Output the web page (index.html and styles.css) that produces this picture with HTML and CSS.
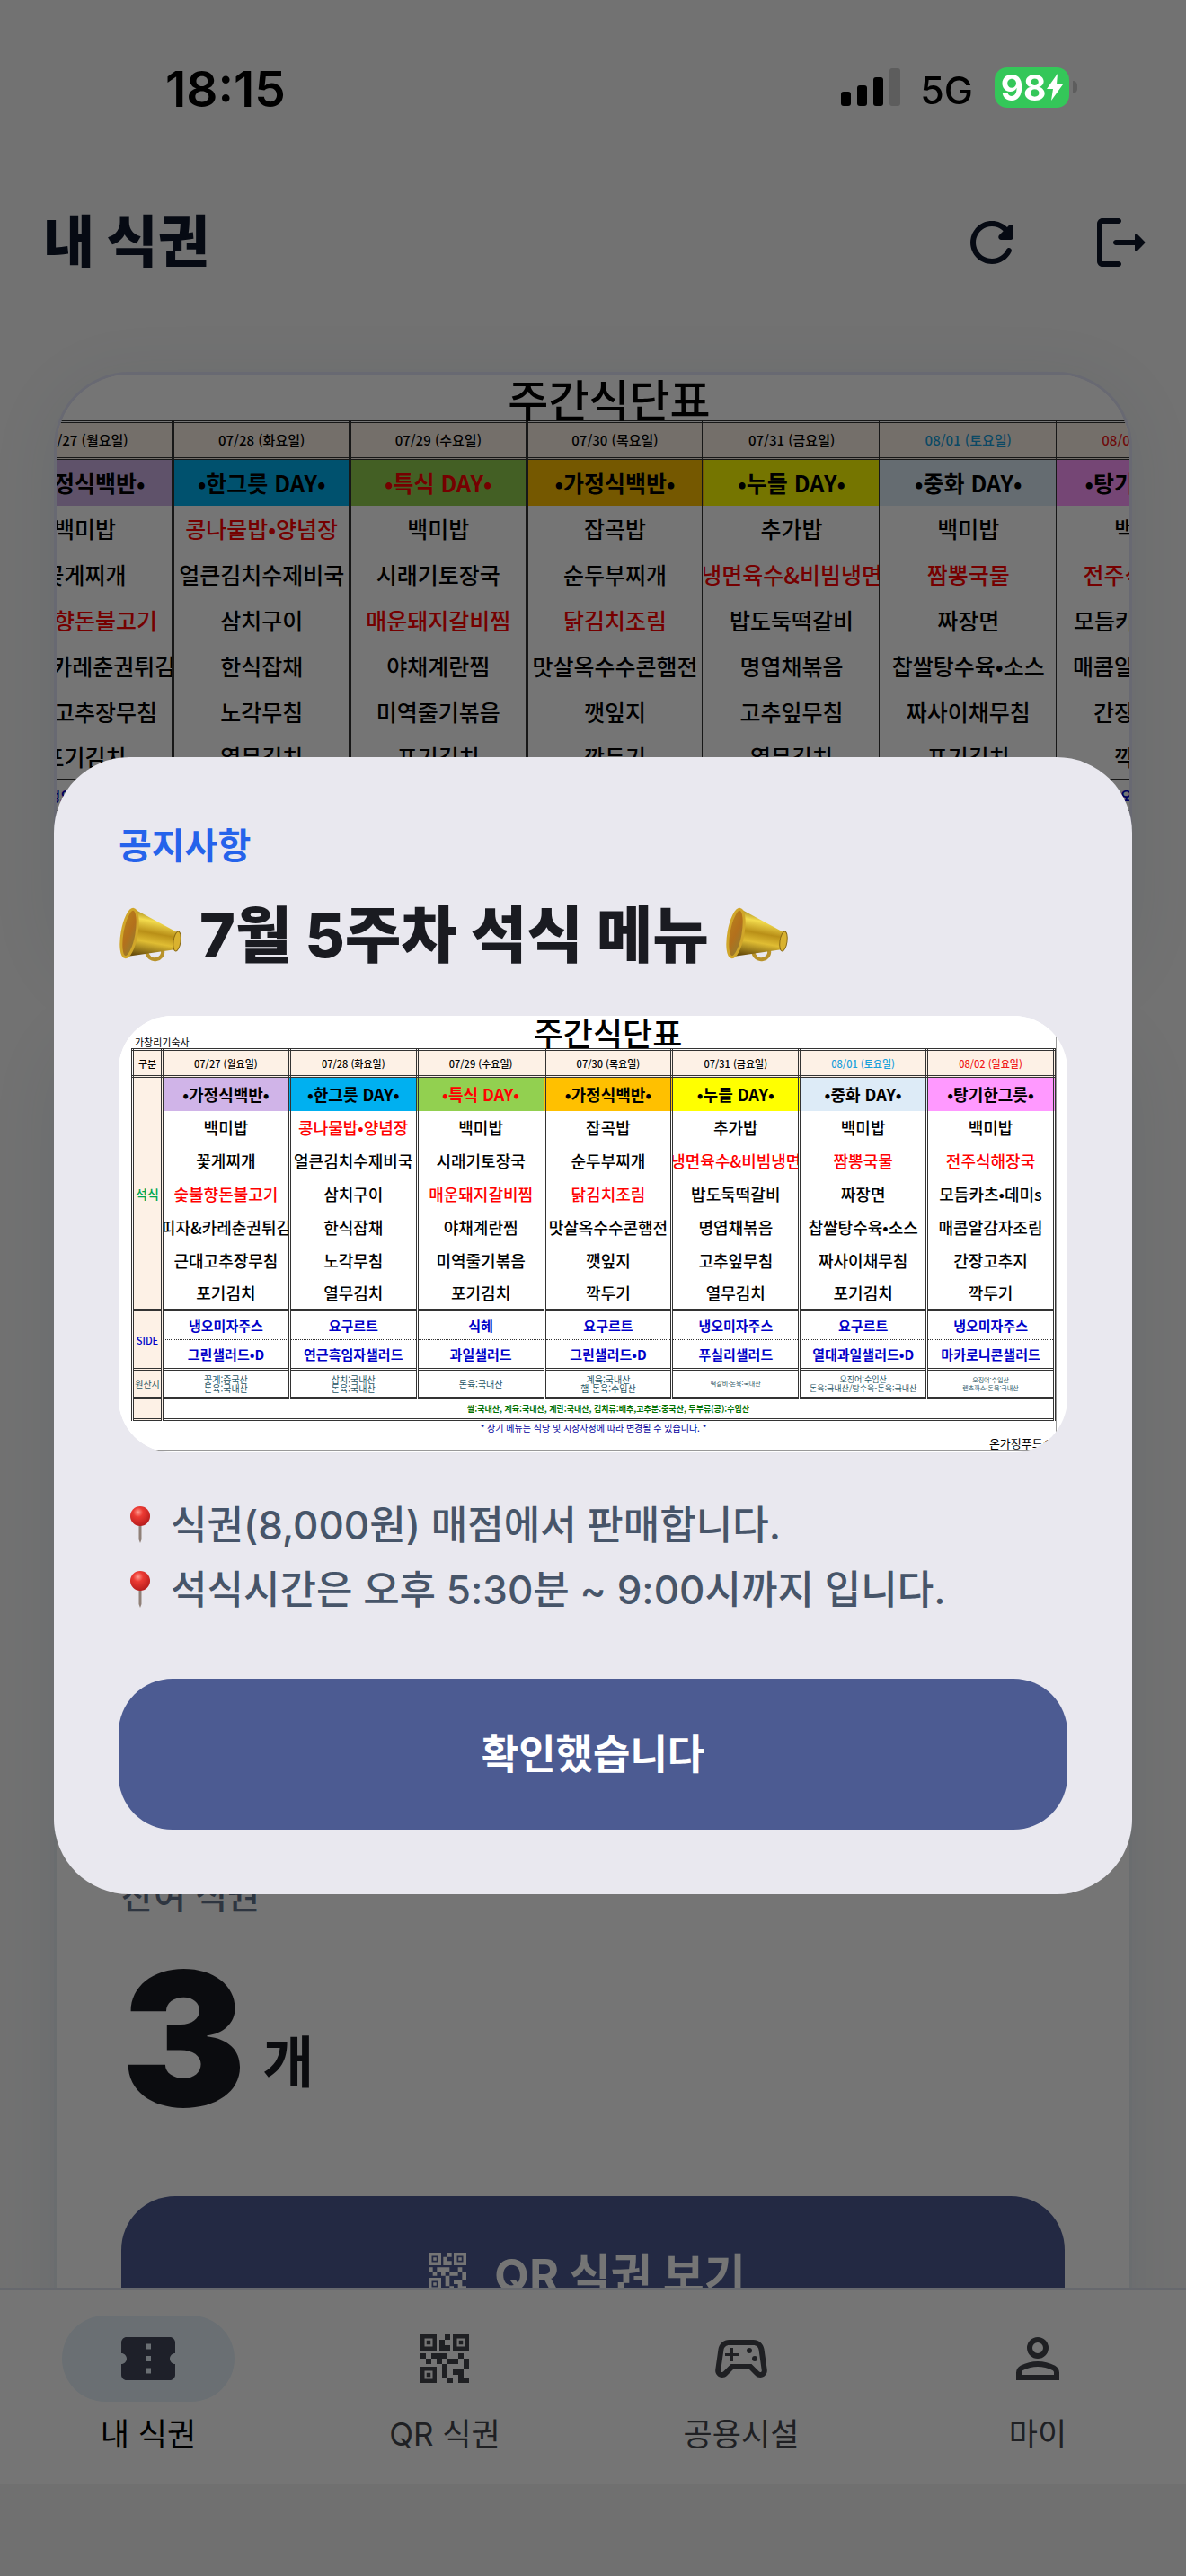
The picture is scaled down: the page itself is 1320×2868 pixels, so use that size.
FILE: index.html
```html
<!DOCTYPE html>
<html lang="ko">
<head>
<meta charset="utf-8">
<meta name="viewport" content="width=device-width, initial-scale=1">
<title>내 식권</title>
<link rel="stylesheet" href="styles.css">
</head>
<body>
<svg class="defs" aria-hidden="true">
  <defs>
    <linearGradient id="brass" x1="0.6" y1="0" x2="0.4" y2="1">
      <stop offset="0" stop-color="#8a6a10"/>
      <stop offset="0.25" stop-color="#f3dc4e"/>
      <stop offset="0.5" stop-color="#b98f17"/>
      <stop offset="0.7" stop-color="#e0bd33"/>
      <stop offset="1" stop-color="#6b4f0c"/>
    </linearGradient>
    <linearGradient id="bell" x1="0" y1="0" x2="1" y2="1">
      <stop offset="0" stop-color="#b9821c"/>
      <stop offset="0.5" stop-color="#b3701c"/>
      <stop offset="1" stop-color="#8c8034"/>
    </linearGradient>
    <radialGradient id="pinhead" cx="0.4" cy="0.3" r="0.7">
      <stop offset="0" stop-color="#ff9a8f"/>
      <stop offset="0.35" stop-color="#ec3a33"/>
      <stop offset="1" stop-color="#b81d1d"/>
    </radialGradient>
    <symbol id="megaphone" viewBox="0 0 70 62">
      <path d="M30 49c1 7 6 10 11 9s8-5 7-10" fill="none" stroke="#b8922a" stroke-width="4"/>
      <path d="M18 3 L66 29 L63 47 L8 55z" fill="url(#brass)"/>
      <ellipse cx="64" cy="38" rx="4" ry="11" transform="rotate(8 64 38)" fill="#d9b22f" stroke="#8a6a14" stroke-width="1"/>
      <ellipse cx="11" cy="29" rx="8" ry="27" transform="rotate(10 11 29)" fill="url(#bell)" stroke="#d0a62a" stroke-width="3"/>
    </symbol>
    <symbol id="pin" viewBox="0 0 24 42">
      <path d="M10.500 20h3v17l-1.500 4-1.500-4z" fill="#8f8078"/>
      <circle cx="12" cy="11" r="11" fill="url(#pinhead)"/>
    </symbol>
    <symbol id="qr" viewBox="0 0 24 24">
      <path fill="currentColor" d="M15 21h-2v-2h2v2zm-2-7h-2v5h2v-5zm8-2h-2v4h2v-4zm-2-2h-2v2h2v-2zM7 12H5v2h2v-2zm-2-2H3v2h2v-2zm7-5h2V3h-2v2zm-7.500-.5v3h3v-3h-3zM9 9H3V3h6v6zm-4.500 7.500v3h3v-3h-3zM9 21H3v-6h6v6zm7.500-16.500v3h3v-3h-3zM21 9h-6V3h6v6zm-2 10v-3h-4v2h2v3h4v-2h-2zm-2-7h-4v2h4v-2zm-4-2H7v2h2v2h2v-2h2v-2zm1-1V7h-2V5h-2v4h4zM6.750 5.250h-1.500v1.500h1.500v-1.500zm0 12h-1.500v1.500h1.500v-1.500zm12-12h-1.500v1.500h1.500v-1.500z"/>
    </symbol>
  </defs>
</svg>

<div class="app">
  <div class="status">
    <span class="clock">18:15</span>
    <div class="status-right">
      <svg class="signal" viewBox="0 0 66 42" aria-hidden="true">
        <rect x="0" y="26" width="11" height="16" rx="3"/>
        <rect x="18" y="19" width="11" height="23" rx="3"/>
        <rect x="36" y="10" width="11" height="32" rx="3"/>
        <rect x="54" y="0" width="12" height="42" rx="3" fill="#5d5d5d"/>
      </svg>
      <span class="network">5G</span>
      <span class="battery">98<svg viewBox="0 0 18 30" aria-hidden="true"><path d="M12 0L0 17h7L5 30 18 12h-7z" fill="#fff"/></svg></span>
    </div>
  </div>

  <header class="appbar">
    <h1>내 식권</h1>
    <button class="icon-btn" aria-label="새로고침"><svg viewBox="0 0 24 24"><path fill="currentColor" d="M17.650 6.350C16.020 4.720 13.710 3.780 11.170 4.040c-3.670.37-6.690 3.350-7.100 7.020C3.520 15.910 7.270 20 12 20c3.190 0 5.930-1.870 7.210-4.560.32-.67-.16-1.440-.9-1.440-.37 0-.72.2-.88.53-1.130 2.430-3.840 3.970-6.800 3.310-2.220-.49-4.010-2.300-4.480-4.520C5.310 9.440 8.260 6 12 6c1.660 0 3.140.69 4.220 1.780l-1.510 1.510c-.63.63-.19 1.710.7 1.710H19c.55 0 1-.45 1-1V6.410c0-.89-1.080-1.340-1.710-.71l-.64.65z"/></svg></button>
    <button class="icon-btn" aria-label="로그아웃"><svg viewBox="0 0 24 24"><path fill="currentColor" d="M5 5h6c.55 0 1-.45 1-1s-.45-1-1-1H5c-1.100 0-2 .9-2 2v14c0 1.100.9 2 2 2h6c.55 0 1-.45 1-1s-.45-1-1-1H5V5zM20.650 11.650l-2.790-2.790c-.32-.32-.86-.1-.86.35V11h-7c-.55 0-1 .45-1 1s.45 1 1 1h7v1.790c0 .45.54.67.85.35l2.790-2.790c.2-.19.2-.51.01-.7z"/></svg></button>
  </header>

  <main class="content">
    <section class="card hero">
      <div class="sheet sheet-large">
        <div class="sheet-top"><span></span><strong>주간식단표</strong><span></span></div>
        <table class="menu">
          <colgroup><col class="col-kind"><col span="7"></colgroup>
          <thead>
            <tr><th>구분</th><th>07/27 (월요일)</th><th>07/28 (화요일)</th><th>07/29 (수요일)</th><th>07/30 (목요일)</th><th>07/31 (금요일)</th><th class="sat">08/01 (토요일)</th><th class="sun">08/02 (일요일)</th></tr>
          </thead>
          <tbody class="dinner">
            <tr class="theme"><th rowspan="7" class="kind">석식</th><td class="violet">•가정식백반•</td><td class="blue">•한그릇 DAY•</td><td class="green red">•특식 DAY•</td><td class="amber">•가정식백반•</td><td class="yellow">•누들 DAY•</td><td class="ice">•중화 DAY•</td><td class="pink">•탕기한그릇•</td></tr>
            <tr><td>백미밥</td><td class="red">콩나물밥•양념장</td><td>백미밥</td><td>잡곡밥</td><td>추가밥</td><td>백미밥</td><td>백미밥</td></tr>
            <tr><td>꽃게찌개</td><td>얼큰김치수제비국</td><td>시래기토장국</td><td>순두부찌개</td><td class="red"><span class="wide">냉면육수&amp;비빔냉면</span></td><td class="red">짬뽕국물</td><td class="red">전주식해장국</td></tr>
            <tr><td class="red">숯불향돈불고기</td><td>삼치구이</td><td class="red">매운돼지갈비찜</td><td class="red">닭김치조림</td><td>밥도둑떡갈비</td><td>짜장면</td><td>모듬카츠•데미s</td></tr>
            <tr><td><span class="wide">피자&amp;카레춘권튀김</span></td><td>한식잡채</td><td>야채계란찜</td><td>맛살옥수수콘햄전</td><td>명엽채볶음</td><td>찹쌀탕수육•소스</td><td>매콤알감자조림</td></tr>
            <tr><td>근대고추장무침</td><td>노각무침</td><td>미역줄기볶음</td><td>깻잎지</td><td>고추잎무침</td><td>짜사이채무침</td><td>간장고추지</td></tr>
            <tr><td>포기김치</td><td>열무김치</td><td>포기김치</td><td>깍두기</td><td>열무김치</td><td>포기김치</td><td>깍두기</td></tr>
          </tbody>
          <tbody class="side">
            <tr><th>SIDE</th><td>냉오미자주스</td><td>요구르트</td><td>식혜</td><td>요구르트</td><td>냉오미자주스</td><td>요구르트</td><td>냉오미자주스</td></tr>
          </tbody>
        </table>
      </div>
    </section>

    <section class="card ticket">
      <p class="ticket-label">잔여 식권</p>
      <p class="ticket-count"><strong>3</strong><span>개</span></p>
      <button class="primary ticket-btn"><svg viewBox="0 0 24 24" aria-hidden="true"><use href="#qr"/></svg>QR 식권 보기</button>
    </section>
  </main>

  <nav class="tabs">
    <a href="#tickets" class="tab active" aria-current="page">
      <span class="tab-icon"><svg viewBox="0 0 24 24"><path fill="currentColor" d="M22 10V6c0-1.110-.9-2-2-2H4c-1.100 0-1.990.89-1.990 2v4c1.100 0 1.990.9 1.990 2s-.89 2-2 2v4c0 1.100.9 2 2 2h16c1.100 0 2-.9 2-2v-4c-1.100 0-2-.9-2-2s.9-2 2-2zm-9 7.500h-2v-2h2v2zm0-4.500h-2v-2h2v2zm0-4.500h-2v-2h2v2z"/></svg></span>
      내 식권
    </a>
    <a href="#qr-ticket" class="tab">
      <span class="tab-icon"><svg viewBox="0 0 24 24"><use href="#qr"/></svg></span>
      QR 식권
    </a>
    <a href="#facilities" class="tab">
      <span class="tab-icon"><svg viewBox="0 0 24 24" fill="currentColor"><path d="M21.580 16.090l-1.090-7.660C20.210 6.460 18.520 5 16.530 5H7.470C5.480 5 3.790 6.460 3.510 8.430l-1.090 7.660C2.200 17.630 3.390 19 4.940 19c.68 0 1.320-.27 1.800-.75L9 16h6l2.250 2.250c.48.48 1.130.75 1.800.75 1.560 0 2.750-1.370 2.530-2.910zm-2.100.72c-.08.09-.21.19-.42.19-.15 0-.29-.06-.39-.16L15.830 14H8.170l-2.840 2.840c-.1.1-.24.16-.39.16-.21 0-.34-.1-.42-.19-.08-.09-.16-.23-.13-.44l1.090-7.660C5.630 7.740 6.480 7 7.470 7h9.060c.99 0 1.840.74 1.980 1.720l1.090 7.660c.03.2-.05.34-.12.43z"/><path d="M9 8H8v2H6v1h2v2h1v-2h2v-1H9z"/><circle cx="17" cy="12" r="1"/><circle cx="15" cy="9" r="1"/></svg></span>
      공용시설
    </a>
    <a href="#my" class="tab">
      <span class="tab-icon"><svg viewBox="0 0 24 24"><path fill="currentColor" d="M12 12q-1.650 0-2.825-1.175T8 8t1.175-2.825T12 4t2.825 1.175T16 8t-1.175 2.825T12 12m-8 8v-2.800q0-.85.438-1.562T5.600 14.550q1.550-.775 3.150-1.162T12 13t3.250.388t3.150 1.162q.725.375 1.163 1.088T20 17.200V20zm2-2h12v-.8q0-.275-.137-.5t-.363-.35q-1.350-.675-2.725-1.012T12 15t-2.775.338T6.500 16.350q-.225.125-.363.35T6 17.200zm6-8q.825 0 1.413-.587T14 8t-.587-1.412T12 6t-1.412.588T10 8t.588 1.413T12 10"/></svg></span>
      마이
    </a>
  </nav>
</div>

<div class="scrim">
  <section class="modal" role="dialog" aria-modal="true" aria-labelledby="notice-title">
    <p class="eyebrow">공지사항</p>
    <h2 id="notice-title"><svg class="horn" aria-hidden="true"><use href="#megaphone"/></svg>7월 5주차 석식 메뉴<svg class="horn" aria-hidden="true"><use href="#megaphone"/></svg></h2>
    <div class="notice-sheet">
      <div class="sheet">
        <div class="sheet-top"><span>가창리기숙사</span><strong>주간식단표</strong><span></span></div>
        <table class="menu">
          <colgroup><col class="col-kind"><col span="7"></colgroup>
          <thead>
            <tr><th>구분</th><th>07/27 (월요일)</th><th>07/28 (화요일)</th><th>07/29 (수요일)</th><th>07/30 (목요일)</th><th>07/31 (금요일)</th><th class="sat">08/01 (토요일)</th><th class="sun">08/02 (일요일)</th></tr>
          </thead>
          <tbody class="dinner">
            <tr class="theme"><th rowspan="7" class="kind">석식</th><td class="violet">•가정식백반•</td><td class="blue">•한그릇 DAY•</td><td class="green red">•특식 DAY•</td><td class="amber">•가정식백반•</td><td class="yellow">•누들 DAY•</td><td class="ice">•중화 DAY•</td><td class="pink">•탕기한그릇•</td></tr>
            <tr><td>백미밥</td><td class="red">콩나물밥•양념장</td><td>백미밥</td><td>잡곡밥</td><td>추가밥</td><td>백미밥</td><td>백미밥</td></tr>
            <tr><td>꽃게찌개</td><td>얼큰김치수제비국</td><td>시래기토장국</td><td>순두부찌개</td><td class="red"><span class="wide">냉면육수&amp;비빔냉면</span></td><td class="red">짬뽕국물</td><td class="red">전주식해장국</td></tr>
            <tr><td class="red">숯불향돈불고기</td><td>삼치구이</td><td class="red">매운돼지갈비찜</td><td class="red">닭김치조림</td><td>밥도둑떡갈비</td><td>짜장면</td><td>모듬카츠•데미s</td></tr>
            <tr><td><span class="wide">피자&amp;카레춘권튀김</span></td><td>한식잡채</td><td>야채계란찜</td><td>맛살옥수수콘햄전</td><td>명엽채볶음</td><td>찹쌀탕수육•소스</td><td>매콤알감자조림</td></tr>
            <tr><td>근대고추장무침</td><td>노각무침</td><td>미역줄기볶음</td><td>깻잎지</td><td>고추잎무침</td><td>짜사이채무침</td><td>간장고추지</td></tr>
            <tr><td>포기김치</td><td>열무김치</td><td>포기김치</td><td>깍두기</td><td>열무김치</td><td>포기김치</td><td>깍두기</td></tr>
          </tbody>
          <tbody class="side">
            <tr><th rowspan="2">SIDE</th><td>냉오미자주스</td><td>요구르트</td><td>식혜</td><td>요구르트</td><td>냉오미자주스</td><td>요구르트</td><td>냉오미자주스</td></tr>
            <tr><td>그린샐러드•D</td><td>연근흑임자샐러드</td><td>과일샐러드</td><td>그린샐러드•D</td><td>푸실리샐러드</td><td>열대과일샐러드•D</td><td>마카로니콘샐러드</td></tr>
          </tbody>
          <tbody class="origin">
            <tr><th>원산지</th><td>꽃게:중국산<br>돈육:국내산</td><td>삼치:국내산<br>돈육:국내산</td><td>돈육:국내산</td><td>계육:국내산<br>햄-돈육:수입산</td><td class="tiny">떡갈비-돈육:국내산</td><td class="long">오징어:수입산<br>돈육:국내산/탕수육-돈육:국내산</td><td class="tiny">오징어:수입산<br>렌츠까스-돈육:국내산</td></tr>
            <tr class="common"><th></th><td colspan="7">쌀:국내산, 계육:국내산, 계란:국내산, 김치류:배추,고추분:중국산, 두부류(콩):수입산</td></tr>
          </tbody>
        </table>
        <p class="sheet-note">* 상기 메뉴는 식당 및 시장사정에 따라 변경될 수 있습니다. *</p>
        <p class="sheet-sign">온가정푸드@</p>
      </div>
    </div>
    <ul class="notes">
      <li><svg class="pin" aria-hidden="true"><use href="#pin"/></svg>식권(8,000원) 매점에서 판매합니다.</li>
      <li><svg class="pin" aria-hidden="true"><use href="#pin"/></svg>석식시간은 오후 5:30분 ~ 9:00시까지 입니다.</li>
    </ul>
    <button class="primary">확인했습니다</button>
  </section>
</div>
</body>
</html>
```
FILE: styles.css
```css
* {
  box-sizing: border-box;
  margin: 0;
  padding: 0;
}

body {
  font-family: Inter, "Noto Sans CJK KR", sans-serif;
  background: #f8f8f8;
  color: #1a1b21;
}

button {
  border: 0;
  background: none;
  font: inherit;
  color: inherit;
}

/* Shared gradients and symbols; must stay rendered for the fills to resolve */
.defs {
  position: absolute;
  width: 0;
  height: 0;
}

.app {
  display: flex;
  flex-direction: column;
  height: 100vh;
}

/* Status bar: stays above the scrim */
.status {
  position: relative;
  z-index: 3;
  display: flex;
  flex: none;
  align-items: flex-start;
  justify-content: space-between;
  height: 186px;
  padding: 66px 121px 0 184px;
  color: #000;
}

.clock {
  font-size: 55px;
  font-weight: 600;
  line-height: 66px;
}

.status-right {
  display: flex;
  align-items: center;
  height: 62px;
}

.signal {
  width: 66px;
  height: 42px;
}

.network {
  margin: 6px 24px 0 22px;
  font-size: 43px;
  font-weight: 500;
  line-height: 54px;
}

.battery {
  position: relative;
  display: flex;
  align-items: center;
  justify-content: center;
  gap: 1px;
  width: 83px;
  height: 45px;
  margin-right: 9px;
  border-radius: 14px;
  background: #34c759;
  color: #fff;
  font-size: 39px;
  font-weight: 700;
}

.battery svg {
  width: 18px;
  height: 30px;
}

.battery::after {
  content: "";
  position: absolute;
  right: -9px;
  width: 5px;
  height: 14px;
  border-radius: 0 5px 5px 0;
  background: #5d5d5d;
}

.appbar {
  display: flex;
  flex: none;
  align-items: center;
  height: 168px;
  padding-left: 48px;
  color: #0f172a;
}

.appbar h1 {
  flex: 1;
  font-size: 62px;
  font-weight: 800;
  line-height: 84px;
}

.icon-btn {
  display: grid;
  place-items: center;
  width: 144px;
  height: 144px;
}

.icon-btn svg {
  width: 72px;
  height: 72px;
}

.content {
  display: flex;
  flex: 1;
  flex-direction: column;
  gap: 48px;
  min-height: 0;
  overflow: hidden;
  padding: 60px 60px 0;
}

.card {
  flex: none;
  border: 3px solid #e6edf2;
  border-radius: 84px;
  background: #fff;
  box-shadow: 0 12px 72px rgba(40, 100, 150, 0.1);
}

.hero {
  height: 672px;
  overflow: hidden;
  border-color: #e2e4f8;
}

.ticket {
  display: flex;
  flex-direction: column;
  justify-content: flex-end;
  min-height: 1554px;
  padding: 72px;
}

.ticket-label {
  color: #64748b;
  font-size: 39px;
  font-weight: 500;
  line-height: 48px;
}

.ticket-count {
  display: flex;
  align-items: flex-end;
  gap: 18px;
  margin: 30px 0 72px;
}

.ticket-count strong {
  font-size: 208px;
  font-weight: 900;
  line-height: 208px;
}

.ticket-count span {
  padding-bottom: 28px;
  font-size: 62px;
  font-weight: 700;
  line-height: 96px;
}

.primary {
  display: flex;
  align-items: center;
  justify-content: center;
  width: 100%;
  height: 168px;
  padding-bottom: 6px;
  border-radius: 60px;
  background: #4c5b92;
  color: #fff;
  font-size: 45px;
  font-weight: 700;
}

.ticket-btn {
  gap: 24px;
  padding: 0 20px 0 0;
  font-size: 50px;
}

.ticket-btn svg {
  width: 56px;
  height: 56px;
}

/* Weekly menu sheet */
.sheet {
  --kind: 33px;
  --head: 30px;
  --theme: 38px;
  --row: 37px;
  --text: 18px;
  --date: 11px;
  height: 484px;
  margin-right: 12px;
  padding-left: 14px;
  border-right: 1px solid #999;
  border-bottom: 1px solid #999;
  background: #fff;
  color: #000;
  font-family: "Noto Sans CJK KR", sans-serif;
}

.sheet-top {
  display: grid;
  grid-template-columns: 1fr auto 1fr;
  align-items: end;
  height: 36px;
}

.sheet-top strong {
  padding-left: 32px;
  font-size: 36px;
  font-weight: 500;
  line-height: 36px;
}

.sheet-top span {
  padding-left: 4px;
  font-size: 11px;
  line-height: 14px;
}

.menu {
  width: 100%;
  border-collapse: collapse;
  table-layout: fixed;
  text-align: center;
  font-size: var(--text);
  line-height: 24px;
  white-space: nowrap;
}

.col-kind {
  width: var(--kind);
}

.menu th,
.menu td {
  border-right: 3px double #333;
  border-left: 3px double #333;
  font-weight: 500;
}

.menu thead tr {
  height: var(--head);
}

.menu th {
  background: #fdf1e6;
  font-size: var(--date);
  line-height: 16px;
}

.menu thead th,
.menu tbody {
  border: 3px double #333;
}

.menu tr {
  height: var(--row);
}

.menu .theme {
  height: var(--theme);
}

.menu .theme td {
  font-weight: 700;
}

.menu .kind {
  color: #00a651;
  font-size: 14px;
}

.wide {
  display: flex;
  justify-content: center;
  overflow: hidden;
}

.menu .red { color: #f00; }
.menu .sat { color: #18a0dc; }
.menu .sun { color: #f01818; }
.violet { background: #d0b4e8; }
.blue { background: #00b0f0; }
.green { background: #92d050; }
.amber { background: #ffc000; }
.yellow { background: #ff0; }
.ice { background: #ddebf7; }
.pink { background: #f9f; }

.menu .side tr {
  height: 33px;
  color: #0000c8;
}

.menu .side td {
  border-bottom: 1px dotted #333;
  font-size: 15px;
  font-weight: 700;
}

.menu .side tr:last-child td {
  border-bottom: 0;
}

.menu .origin tr {
  height: 32px;
  color: #1f5564;
}

.menu .origin th,
.menu .origin td {
  font-size: 10px;
  font-weight: 400;
  line-height: 10px;
}

.menu .origin .long {
  font-size: 9px;
}

.menu .origin .tiny {
  font-size: 7px;
  line-height: 9px;
}

.menu .origin .common {
  height: 24px;
  color: #007000;
}

.menu .common th,
.menu .common td {
  border-top: 3px double #333;
}

.menu .origin .common td {
  font-size: 9px;
  font-weight: 700;
}

.sheet-note {
  color: #00009c;
  text-align: center;
  font-size: 10px;
  line-height: 16px;
}

.sheet-sign {
  padding-right: 2px;
  text-align: right;
  font-size: 13px;
  line-height: 18px;
}

.sheet-large {
  --kind: 45px;
  --head: 41px;
  --theme: 52px;
  --row: 51px;
  --text: 25px;
  --date: 15px;
  width: 122%;
  height: 669px;
  margin-left: -11%;
  padding: 0 14px 0 18px;
  border: 0;
}

.sheet-large .sheet-top {
  height: 51px;
}

.sheet-large .sheet-top strong {
  font-size: 49px;
  line-height: 51px;
}

.sheet-large .menu {
  line-height: 32px;
}

.tabs {
  display: grid;
  flex: none;
  grid-template-columns: repeat(4, 1fr);
  height: 321px;
  padding-top: 28px;
  border-top: 3px solid #dfe3ee;
  border-bottom: 102px solid #f5f5f5;
  background: #fff;
}

.tab {
  display: flex;
  flex-direction: column;
  align-items: center;
  gap: 12px;
  color: #44474e;
  font-size: 35px;
  line-height: 48px;
  text-decoration: none;
}

.tab-icon {
  display: grid;
  place-items: center;
  width: 192px;
  height: 96px;
  border-radius: 48px;
}

.tab-icon svg {
  width: 72px;
  height: 72px;
}

.active {
  color: #000;
}

.active .tab-icon {
  background: #e6f2fa;
  color: #424659;
}

/* Notice dialog */
.scrim {
  position: fixed;
  z-index: 2;
  inset: 0;
  display: flex;
  align-items: center;
  justify-content: center;
  padding: 186px 60px 102px;
  background: rgba(0, 0, 0, 0.54);
}

.modal {
  width: 100%;
  padding: 72px;
  border-radius: 84px;
  background: #e9e8ef;
}

.eyebrow {
  color: #2563eb;
  font-size: 40px;
  font-weight: 700;
  line-height: 54px;
}

.modal h2 {
  display: flex;
  align-items: center;
  gap: 18px;
  margin: 30px 0 48px;
  font-size: 68px;
  font-weight: 800;
  line-height: 84px;
}

.horn {
  width: 72px;
  height: 62px;
}

.notice-sheet {
  height: 486px;
  overflow: hidden;
  border-radius: 60px;
  background: #fff;
}

.notes {
  margin: 45px 0 63px;
  list-style: none;
  color: #475569;
  font-size: 44px;
  font-weight: 500;
  line-height: 72px;
}

.notes li {
  display: flex;
  align-items: center;
  padding-left: 12px;
}

.pin {
  width: 24px;
  height: 42px;
  margin-right: 22px;
}
```
